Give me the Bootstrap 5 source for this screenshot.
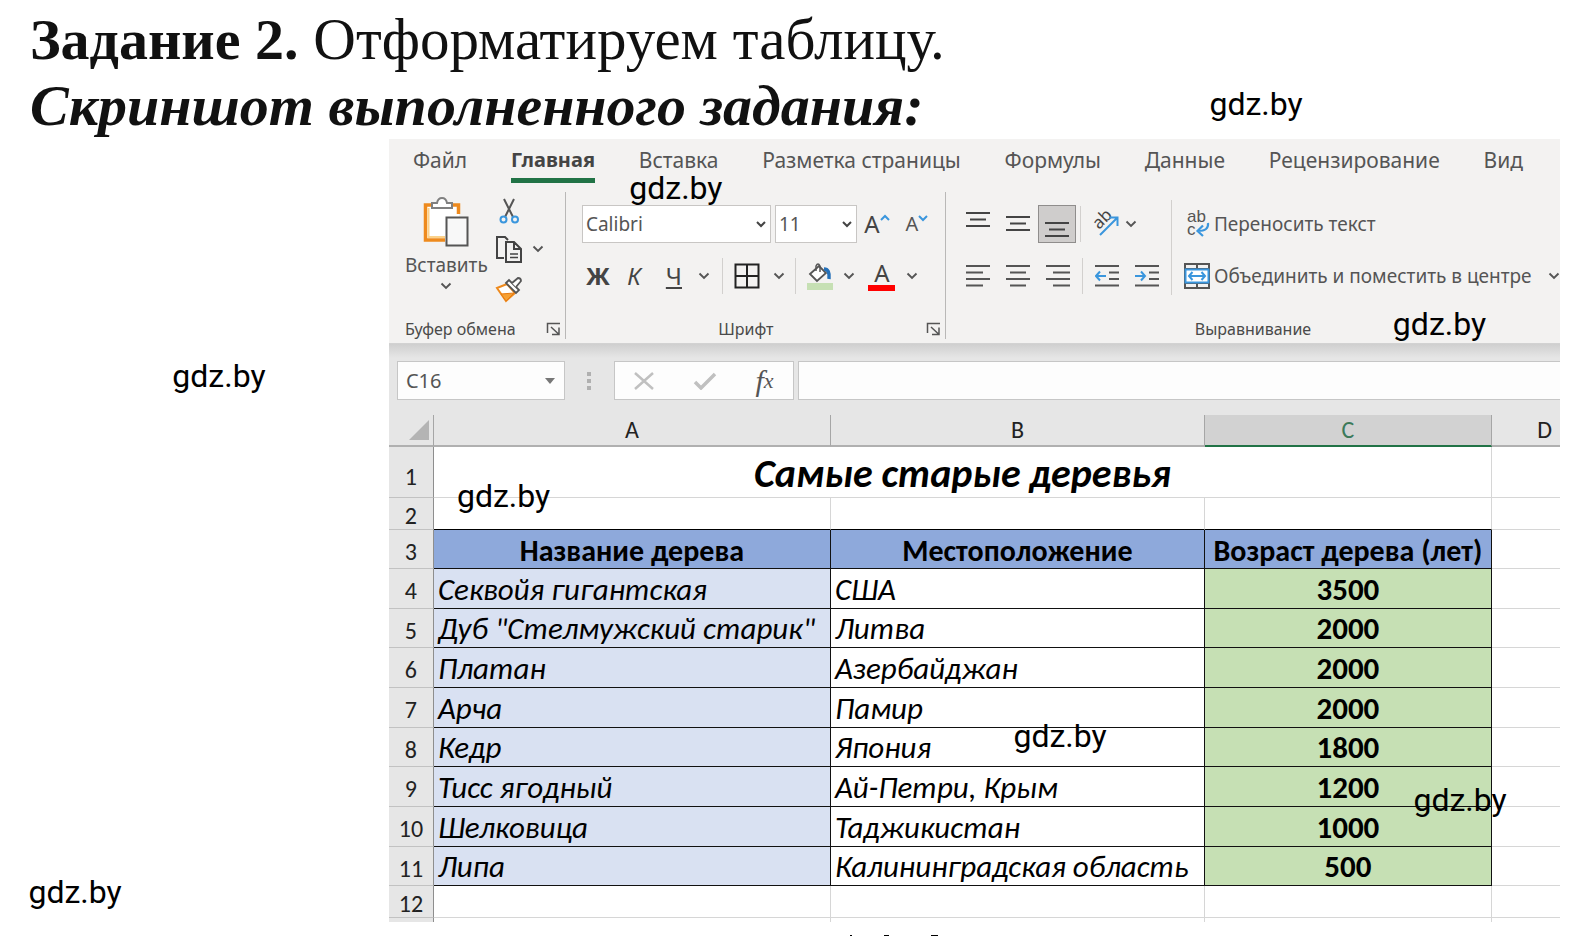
<!DOCTYPE html>
<html lang="ru">
<head>
<meta charset="utf-8">
<meta name="viewport" content="width=device-width, initial-scale=1">
<title>Задание 2</title>
<link href="https://cdn.jsdelivr.net/npm/bootstrap@5.3.0/dist/css/bootstrap.min.css" rel="stylesheet">
<style>
  body { background: #fff; color: #000; font-family: "Noto Sans", "Open Sans", sans-serif; overflow-x: hidden; }
  .page { min-height: 100vh; overflow: hidden; }
  .doc-head { font-family: "Liberation Serif", serif; color: #111; padding: 6px 0 0 30px; }
  .doc-head h1, .doc-head h2 { margin: 0; line-height: 66px; font-size: 59px; font-weight: 400; color: #111; }
  .doc-head h1 b { font-size: 58px; }
  .doc-head h2 { font-size: 58px; font-weight: 700; font-style: italic; }
  .workbook { margin: 0 21px 0 24.6%; background: #e6e6e6; overflow: hidden; }

  /* ribbon */
  .ribbon { background: #f3f2f1; color: #4a4a4a; border-bottom: 1px solid #d2d2d2; }
  .tabs { padding: 4px 37px 0 24px; height: 53px; }
  .tabs a { font-size: 21px; line-height: 34px; height: 40px; color: #555; text-decoration: none; white-space: nowrap; }
  .tabs a.current { font-weight: 700; font-size: 20px; color: #444; border-bottom: 5px solid #217346; }
  .group { height: 147px; border-right: 1px solid #b9b8b7; }
  .group:last-child { border-right: 0; }
  .clip { width: 177px; }
  .font-group { width: 380px; }
  .caption-line { font-size: 16px; line-height: 20px; height: 20px; }
  .tools { height: 127px; }
  .rows { display: flex; flex-direction: column; gap: 14px; padding-top: 13px; }
  .tb { border: 0; background: none; padding: 0; color: #444; display: flex; align-items: center; justify-content: center; flex: none; }
  .tool-row { height: 38px; }
  .w-12x { width: 12px; } .w-20x { width: 20px; } .w-26x { width: 26px; } .w-32x { width: 32px; } .w-40x { width: 40px; }
  .letter { font-size: 24px; line-height: 30px; }
  .label-text { font-size: 19px; line-height: 26px; white-space: nowrap; color: #555; }
  .rule { width: 1px; height: 36px; background: #d2d0ce; flex: none; }
  .chosen { background: #cfcdcc; border: 1px solid #8f8d8c; height: 38px; width: 38px; }
  .combo { appearance: none; height: 38px; border: 1px solid #c8c6c4; border-radius: 0; font-size: 19px; color: #555; padding: 0 3px; background: #fff url("data:image/svg+xml,%3Csvg xmlns='http://www.w3.org/2000/svg' width='10' height='7'%3E%3Cpath d='M1 1l4 4 4-4' fill='none' stroke='%23444' stroke-width='2'/%3E%3C/svg%3E") no-repeat right 4px center; }
  .combo-face { width: 189px; }
  .combo-size { width: 82px; }
  svg { display: block; flex: none; }

  /* formula bar */
  .formula { padding: 17px 0 15px 8px; background: linear-gradient(#cfcfcf, #e6e6e6 14px); }
  .box { background: #fdfdfd; border: 1px solid #c6c6c6; height: 39px; border-radius: 0; }
  .name-box { width: 168px; }
  .name-box input { border: 0; background: none; width: 120px; font-size: 20px; color: #555; padding: 0 0 0 8px; outline: 0; }
  .dots { margin: 0 22px; }
  .fx-box { width: 180px; }
  .fx-label { font: italic 400 30px/30px "Liberation Serif", serif; color: #555; }
  .fx-label small { font-size: 22px; }
  .formula-input { border-right: 0; min-width: 0; padding: 0 8px; outline: 0; }

  /* sheet */
  .grid { width: 100%; table-layout: fixed; border-collapse: separate; border-spacing: 0; background: #fff; font-family: Carlito, Lato, sans-serif; }
  .grid th, .grid td { padding: 0 4px; border: 0 solid #d6d6d6; border-width: 0 1px 1px 0; line-height: 36px; white-space: nowrap; overflow: hidden; }
  .grid td:last-child, .grid thead th:last-child { border-right: 0; }
  .grid thead th { background: #e6e6e6; font-size: 24px; font-weight: 400; height: 32px; line-height: 28px; color: #222; text-align: center; border-bottom: 2px solid #b0b0b0; border-right-color: #a6a6a6; }
  .grid thead th.picked { background: #d2d2d2; color: #3c7a5a; border-bottom-color: #217346; }
  .grid tbody th { background: #e6e6e6; font-size: 24px; font-weight: 400; color: #222; text-align: center; border-color: #c2c2c2; border-right-color: #8e8e8e; padding: 4px 0 0; line-height: 27px; }
  .c-row { width: 45px; } .c-a { width: 397px; } .c-b { width: 374px; } .c-c { width: 287px; }
  .grid tr.title-row td { height: 51px; }
  .grid tr.title-row th { padding-top: 8px; }
  .grid td.sheet-title { font-size: 40px; font-weight: 700; font-style: italic; text-align: center; padding-top: 4px; }
  .grid tr.thin td { height: 32px; }
  .grid tr.odd-h td { height: 39px; }
  .grid tr.even-h td { height: 40px; }
  .grid tr.last td { height: 4px; line-height: 1px; border-bottom: 0; }
  .grid tr.last th { padding: 0; line-height: 1px; border-bottom: 0; }
  .grid tr.above td:not(:last-child) { border-bottom-color: #000; }
  .grid tr.head td, .grid tr.item td { font-size: 31px; }
  .grid tr.head td:not(:last-child), .grid tr.item td:not(:last-child) { border-color: #111; }
  .grid tr.head td:not(:last-child) { background: #8ea9db; font-size: 30px; font-weight: 700; text-align: center; padding-top: 3px; line-height: 34px; }
  .grid tr.item td:nth-child(2) { background: #d9e1f2; font-style: italic; }
  .grid tr.item td:nth-child(3) { font-style: italic; }
  .grid tr.item td:nth-child(4) { background: #c6e0b4; font-weight: 700; text-align: center; }

  /* site stamps lie over the page */
  .stamp { position: absolute; font: 400 32px/38px Roboto, sans-serif; color: #000; }
  .s1 { left: 76.5%; top: 85px; } .s2 { left: 39.8%; top: 169px; } .s3 { left: 88.1%; top: 305px; }
  .s4 { left: 10.9%; top: 357px; } .s5 { left: 28.9%; top: 477px; } .s6 { left: 64.1%; top: 717px; }
  .s7 { left: 89.4%; top: 781px; } .s8 { left: 1.8%; top: 873px; }
  .cut-line { margin: auto 0 0 53.7%; }
</style>
</head>
<body>
<svg width="0" height="0" class="position-absolute" aria-hidden="true">
  <symbol id="chev" viewBox="0 0 12 8"><path d="M1.500 1.500 6 6l4.500-4.500" fill="none" stroke="#555" stroke-width="1.900"/></symbol>
  <symbol id="launch" viewBox="0 0 15 14"><path d="M1.500 11V1.500H14M5 5l7.500 7M13 5.500V12.500H6" fill="none" stroke="#555" stroke-width="1.500"/></symbol>
</svg>
<main class="page position-relative d-flex flex-column">
  <header class="doc-head">
    <h1><b>Задание 2.</b> Отформатируем таблицу.</h1>
    <h2>Скриншот выполненного задания:</h2>
  </header>

  <section class="workbook">
    <div class="ribbon">
      <nav class="tabs d-flex justify-content-between">
        <a href="#">Файл</a><a href="#" class="current">Главная</a><a href="#">Вставка</a><a href="#">Разметка страницы</a><a href="#">Формулы</a><a href="#">Данные</a><a href="#">Рецензирование</a><a href="#">Вид</a>
      </nav>
      <div class="d-flex pb-1">
        <div class="group clip flex-shrink-0">
          <div class="tools d-flex">
            <button class="tb flex-column justify-content-start ms-3 pt-1">
              <svg width="46" height="52" viewBox="0 0 46 52"><path d="M2 9h34v35H2z" fill="#fff"/><path d="M22 44H2.500V9H9M29 9h6.500v9" fill="none" stroke="#ee8a1d" stroke-width="3.500"/><path d="M5.500 12v29H22" fill="none" stroke="#fbd28b" stroke-width="2"/><path d="M9 12V7h5q1-5 5-5t5 5h5v5z" fill="#fff" stroke="#808080" stroke-width="2"/><path d="M23.500 21.500h21v28h-21z" fill="#f8f8f8" stroke="#555" stroke-width="2"/></svg>
              <span class="label-text pt-1">Вставить</span>
              <svg class="mt-1" width="12" height="8"><use href="#chev"/></svg>
            </button>
            <div class="d-flex flex-column ms-2 pt-1 gap-2">
              <button class="tb w-26x" aria-label="Вырезать"><svg width="26" height="30" viewBox="0 0 26 30"><path d="M8 3l9 18M18 3L9 21" stroke="#555" stroke-width="2" fill="none"/><circle cx="7.500" cy="23.500" r="3" fill="none" stroke="#3a96dd" stroke-width="2"/><circle cx="19" cy="23.500" r="3" fill="none" stroke="#3a96dd" stroke-width="2"/></svg></button>
              <div class="d-flex align-items-center"><button class="tb w-26x" aria-label="Копировать"><svg width="28" height="30" viewBox="0 0 28 30"><path d="M9 24H2V3h8l3 3M11 8h8l7 7v13H11z M19 8v7h7" fill="none" stroke="#444" stroke-width="2"/><path d="M15 20h8M15 23.500h8" stroke="#444" stroke-width="1.500"/></svg></button>
              <button class="tb w-32x" aria-label="Варианты копирования"><svg width="12" height="8"><use href="#chev"/></svg></button></div>
              <button class="tb w-26x" aria-label="Формат по образцу"><svg width="28" height="32" viewBox="0 -4 28 32"><path d="M2 12l10-4 8 9-9 8z" fill="#fff" stroke="#ee8a1d" stroke-width="2"/><path d="M6 18l13-1-8 8z" fill="#f6a033" stroke="#e87b10"/><path d="M11 7l3-3 10 10-3 3z" fill="#fff" stroke="#555" stroke-width="1.800"/><path d="M17 7l6-5q3 0 3 3l-5 6" fill="#fff" stroke="#555" stroke-width="1.800"/></svg></button>
            </div>
          </div>
          <div class="caption-line d-flex align-items-center justify-content-between ps-3 pe-1"><span>Буфер обмена</span><svg width="15" height="14"><use href="#launch"/></svg></div>
        </div>

        <div class="group font-group flex-shrink-0">
          <div class="tools rows ps-3">
            <div class="tool-row d-flex align-items-center">
              <select class="combo combo-face" aria-label="Шрифт"><option>Calibri</option></select>
              <select class="combo combo-size ms-1" aria-label="Размер"><option>11</option></select>
              <button class="tb w-40x letter" aria-label="Увеличить размер">A<svg width="10" height="24" viewBox="0 0 10 24"><path d="M1 8l4-4 4 4" fill="none" stroke="#3a96dd" stroke-width="2"/></svg></button>
              <button class="tb w-40x label-text fs-5" aria-label="Уменьшить размер">A<svg width="10" height="24" viewBox="0 0 10 24"><path d="M1 4l4 4 4-4" fill="none" stroke="#3a96dd" stroke-width="2"/></svg></button>
            </div>
            <div class="tool-row d-flex align-items-center">
              <button class="tb w-32x letter fw-bold">Ж</button>
              <button class="tb w-40x letter fst-italic">К</button>
              <button class="tb w-40x letter text-decoration-underline">Ч</button>
              <button class="tb w-20x" aria-label="Варианты подчёркивания"><svg width="12" height="8"><use href="#chev"/></svg></button>
              <span class="rule mx-2"></span>
              <button class="tb w-32x" aria-label="Границы"><svg width="26" height="26" viewBox="0 0 26 26"><path d="M1.500 1.500h23v23h-23zM13 1v24M1 13h24" fill="none" stroke="#222" stroke-width="2"/></svg></button>
              <button class="tb w-32x" aria-label="Варианты границ"><svg width="12" height="8"><use href="#chev"/></svg></button>
              <span class="rule me-2"></span>
              <button class="tb w-32x" aria-label="Цвет заливки"><svg width="28" height="28" viewBox="0 0 28 28"><path d="M4 12L13 4l7 7-9 8z" fill="#fff" stroke="#555" stroke-width="1.800"/><path d="M10 9V4q2-4 4 0v6" fill="none" stroke="#555" stroke-width="1.500"/><path d="M18 7q6 0 5 10" fill="none" stroke="#2470b8" stroke-width="3.500"/><path d="M1 21h26v7H1z" fill="#c6e0b4"/></svg></button>
              <button class="tb w-26x" aria-label="Варианты заливки"><svg width="12" height="8"><use href="#chev"/></svg></button>
              <button class="tb w-40x flex-column letter lh-1" aria-label="Цвет текста">A<svg width="27" height="6"><path d="M0 0h27v6H0z" fill="#f00"/></svg></button>
              <button class="tb w-20x" aria-label="Варианты цвета текста"><svg width="12" height="8"><use href="#chev"/></svg></button>
            </div>
          </div>
          <div class="caption-line d-flex align-items-center justify-content-between pe-1"><span></span><span>Шрифт</span><svg width="15" height="14"><use href="#launch"/></svg></div>
        </div>

        <div class="group flex-grow-1 overflow-hidden">
          <div class="tools d-flex ps-2">
            <div class="rows ps-1">
              <div class="tool-row d-flex align-items-center">
                <button class="tb w-40x" aria-label="По верхнему краю"><svg width="24" height="28" viewBox="0 0 24 28"><path d="M0 3h24M4 9.500h16M0 16h24" stroke="#444" stroke-width="2"/></svg></button>
                <button class="tb w-40x" aria-label="По середине"><svg width="24" height="28" viewBox="0 0 24 28"><path d="M0 7h24M4 13.500h16M0 20h24" stroke="#444" stroke-width="2"/></svg></button>
                <button class="tb chosen" aria-label="По нижнему краю"><svg width="24" height="28" viewBox="0 0 24 28"><path d="M0 13h24M4 19.500h16M0 26h24" stroke="#444" stroke-width="2"/></svg></button>
                <span class="rule mx-1"></span>
                <button class="tb w-40x" aria-label="Ориентация"><svg width="28" height="34" viewBox="0 0 28 34"><text transform="translate(8 23) rotate(-45)" font-size="17" fill="#444">ab</text><path d="M9 28L26 11M18 10.500h8.500V19" fill="none" stroke="#3a96dd" stroke-width="2"/></svg></button>
                <button class="tb w-12x" aria-label="Варианты ориентации"><svg width="12" height="8"><use href="#chev"/></svg></button>
              </div>
              <div class="tool-row d-flex align-items-center">
                <button class="tb w-40x" aria-label="По левому краю"><svg width="24" height="24" viewBox="0 0 24 24"><path d="M0 2h24M0 8.500h17M0 15h24M0 21.500h17" stroke="#555" stroke-width="2"/></svg></button>
                <button class="tb w-40x" aria-label="По центру"><svg width="24" height="24" viewBox="0 0 24 24"><path d="M0 2h24M4 8.500h16M0 15h24M4 21.500h16" stroke="#555" stroke-width="2"/></svg></button>
                <button class="tb w-40x" aria-label="По правому краю"><svg width="24" height="24" viewBox="0 0 24 24"><path d="M0 2h24M7 8.500h17M0 15h24M7 21.500h17" stroke="#555" stroke-width="2"/></svg></button>
                <span class="rule mx-1"></span>
                <button class="tb w-40x" aria-label="Уменьшить отступ"><svg width="24" height="24" viewBox="0 0 24 24"><path d="M0 2h24M14 8.500h10M14 15h10M0 21.500h24" stroke="#555" stroke-width="2"/><path d="M11 12H1M5 7.500L1 12l4 4.500" fill="none" stroke="#3a96dd" stroke-width="2"/></svg></button>
                <button class="tb w-40x" aria-label="Увеличить отступ"><svg width="24" height="24" viewBox="0 0 24 24"><path d="M0 2h24M14 8.500h10M14 15h10M0 21.500h24" stroke="#555" stroke-width="2"/><path d="M0 12h10M6 7.500l4 4.500-4 4.500" fill="none" stroke="#3a96dd" stroke-width="2"/></svg></button>
              </div>
            </div>
            <span class="rule h-75 ms-1 mt-2"></span>
            <div class="rows ps-2">
              <button class="tb tool-row justify-content-start ps-1"><svg width="26" height="38" viewBox="0 0 26 38"><g font-family="Liberation Sans" font-size="17" fill="#555"><text x="3" y="17">ab</text><text x="3" y="30">c</text></g><path d="M24 18q1 8-10 8M19 20.500L13.500 26l5.500 5" fill="none" stroke="#3a96dd" stroke-width="2.200"/></svg><span class="label-text ps-1">Переносить текст</span></button>
              <button class="tb tool-row justify-content-start ps-1"><svg width="26" height="26" viewBox="0 0 26 26"><path d="M1 1h24v24H1zM1 6h24M1 20h24M13 1v5M13 20v5" fill="none" stroke="#555" stroke-width="2"/><path d="M1.500 6.500h23v13h-23z" fill="#fff" stroke="#3a96dd" stroke-width="2"/><path d="M5 13h16M8.500 9L5 13l3.500 4M17.500 9l3.500 4-3.500 4" fill="none" stroke="#3a96dd" stroke-width="2"/></svg><span class="label-text ps-1">Объединить и поместить в центре</span><svg class="ms-3" width="12" height="8"><use href="#chev"/></svg></button>
            </div>
          </div>
          <div class="caption-line text-center">Выравнивание</div>
        </div>
      </div>
    </div>

    <div class="formula d-flex">
      <div class="box name-box d-flex align-items-center justify-content-between pe-2">
        <input type="text" value="C16" aria-label="Имя ячейки">
        <svg width="12" height="6"><path d="M1 0h10L6 6z" fill="#777"/></svg>
      </div>
      <svg class="dots align-self-center" width="5" height="18"><path d="M0 0h4v4H0zM0 7h4v4H0zM0 14h4v4H0z" fill="#b0b0b0"/></svg>
      <div class="box fx-box d-flex align-items-center justify-content-around">
        <button class="tb" aria-label="Отмена"><svg width="20" height="18"><path d="M1 1l18 16M19 1L1 17" stroke="#c0c0c0" stroke-width="2.500"/></svg></button>
        <button class="tb" aria-label="Ввод"><svg width="24" height="18"><path d="M2 10l6 6L22 2" fill="none" stroke="#c0c0c0" stroke-width="3.500"/></svg></button>
        <button class="tb fx-label" aria-label="Вставить функцию">f<small>x</small></button>
      </div>
      <input class="box formula-input flex-grow-1 ms-1" type="text" aria-label="Строка формул">
    </div>

    <table class="grid">
      <colgroup><col class="c-row"><col class="c-a"><col class="c-b"><col class="c-c"><col></colgroup>
      <thead><tr><th><svg class="ms-auto" width="20" height="20"><path d="M20 0v20H0z" fill="#b4b4b4"/></svg></th><th>A</th><th>B</th><th class="picked">C</th><th class="text-end pe-2">D</th></tr></thead>
      <tbody>
        <tr class="title-row"><th>1</th><td class="sheet-title" colspan="3">Самые старые деревья</td><td></td></tr>
        <tr class="thin above"><th>2</th><td></td><td></td><td></td><td></td></tr>
        <tr class="head odd-h"><th>3</th><td>Название дерева</td><td>Местоположение</td><td class="px-0">Возраст дерева (лет)</td><td></td></tr>
        <tr class="item even-h"><th>4</th><td>Секвойя гигантская</td><td>США</td><td>3500</td><td></td></tr>
        <tr class="item odd-h"><th>5</th><td>Дуб "Стелмужский старик"</td><td>Литва</td><td>2000</td><td></td></tr>
        <tr class="item even-h"><th>6</th><td>Платан</td><td>Азербайджан</td><td>2000</td><td></td></tr>
        <tr class="item even-h"><th>7</th><td>Арча</td><td>Памир</td><td>2000</td><td></td></tr>
        <tr class="item odd-h"><th>8</th><td>Кедр</td><td>Япония</td><td>1800</td><td></td></tr>
        <tr class="item even-h"><th>9</th><td>Тисс ягодный</td><td>Ай-Петри, Крым</td><td>1200</td><td></td></tr>
        <tr class="item even-h"><th>10</th><td>Шелковица</td><td>Таджикистан</td><td>1000</td><td></td></tr>
        <tr class="item odd-h"><th>11</th><td>Липа</td><td>Калининградская область</td><td>500</td><td></td></tr>
        <tr class="thin"><th>12</th><td></td><td></td><td></td><td></td></tr>
        <tr class="last"><th></th><td></td><td></td><td></td><td></td></tr>
      </tbody>
    </table>
  </section>

  <svg class="cut-line" width="92" height="1" aria-hidden="true"><path d="M1 0h2v1H1zM35 0h5v1h-5zM82 0h7v1h-7z"/></svg>

  <span class="stamp s1">gdz.by</span><span class="stamp s2">gdz.by</span><span class="stamp s3">gdz.by</span><span class="stamp s4">gdz.by</span>
  <span class="stamp s5">gdz.by</span><span class="stamp s6">gdz.by</span><span class="stamp s7">gdz.by</span><span class="stamp s8">gdz.by</span>
</main>
<script src="https://cdn.jsdelivr.net/npm/bootstrap@5.3.0/dist/js/bootstrap.bundle.min.js"></script>
</body>
</html>
